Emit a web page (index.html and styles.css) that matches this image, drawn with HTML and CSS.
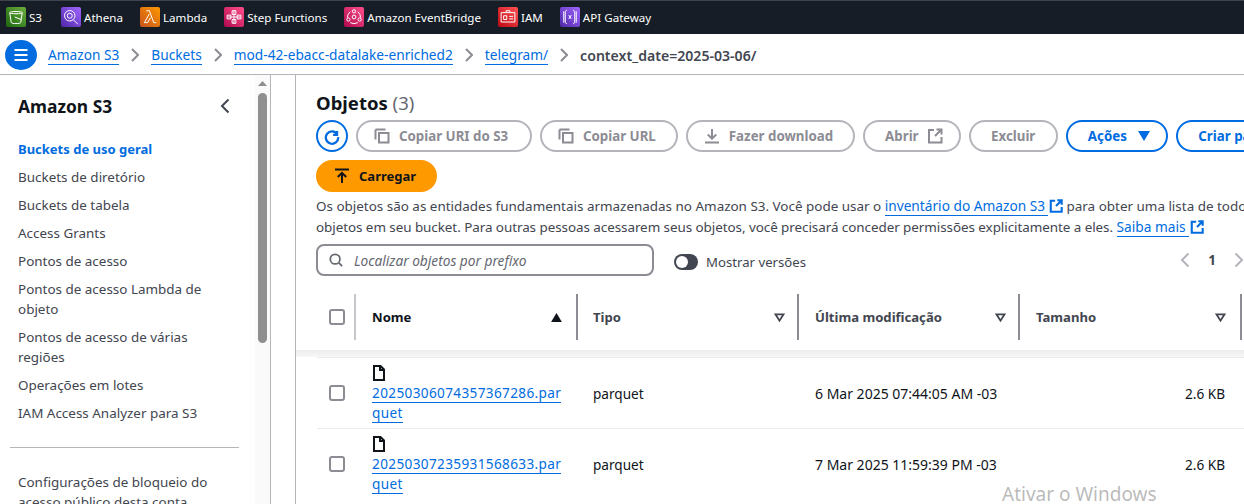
FILE: index.html
```html
<!DOCTYPE html>
<html>
<head>
   <link rel="stylesheet" href="styles.css">
</head>
<body>
   <div class="favbar">
      <span class="fav"><svg class="svc s3" viewBox="0 0 16 16"><path d="M3 4.500c0-1.200 10-1.200 10 0l-1.200 8c-.3 1-7.300 1-7.600 0zM3 4.500c0 1.200 10 1.200 10 0M7 8l5 2"/></svg>S3</span>
      <span class="fav"><svg class="svc athena" viewBox="0 0 16 16"><circle cx="7" cy="7" r="4.200"/><circle cx="7" cy="7" r="2"/><path d="M10 10.300l3.500 3.500"/></svg>Athena</span>
      <span class="fav"><svg class="svc lambda" viewBox="0 0 16 16"><path d="M5 3h2.500L11 12.500h2M7.500 5.500L3.500 12.500h2.500l2.500-4"/></svg>Lambda</span>
      <span class="fav"><svg class="svc stepf" viewBox="0 0 16 16"><path d="M8 2.500v11M3 8h10M6.500 3h3v3h-3zM6.500 10h3v3h-3zM2.500 6.500h3v3h-3zM10.500 6.500h3v3h-3z"/></svg>Step Functions</span>
      <span class="fav"><svg class="svc bridge" viewBox="0 0 16 16"><circle cx="8" cy="3.500" r="1.300"/><circle cx="3.500" cy="10" r="1.300"/><circle cx="12.500" cy="10" r="1.300"/><circle cx="8" cy="8" r="1.500"/><path d="M5 3.800a6 6 0 0 0-2.300 4.700M11 3.800a6 6 0 0 1 2.300 4.700M5 12.500a6 6 0 0 0 6 0"/></svg>Amazon EventBridge</span>
      <span class="fav"><svg class="svc iam" viewBox="0 0 16 16"><path d="M2.500 4.500h11v7.500h-11zM4.500 7h2.500v3h-2.500zM9 7.500h3M9 9.500h3M6.500 4.500v-1.500h3v1.500"/></svg>IAM</span>
      <span class="fav"><svg class="svc gateway" viewBox="0 0 16 16"><path d="M3 3.500v9M5.500 2.500l-1.300 1v9l1.300 1M13 3.500v9M10.500 2.500l1.300 1v9l-1.300 1M7 6.500l1 1.500-1 1.500M9 6.500l-1 1.500 1 1.500"/></svg>API Gateway</span>
   </div>

   <div class="crumbbar">
      <button class="menu-btn"><svg viewBox="0 0 16 16"><path d="M1.500 3h13M1.500 8h13M1.500 13h13"/></svg></button>
      <a class="link">Amazon S3</a>
      <svg class="sep" viewBox="0 0 8 14"><path d="M1 1l6 6-6 6"/></svg>
      <a class="link">Buckets</a>
      <svg class="sep" viewBox="0 0 8 14"><path d="M1 1l6 6-6 6"/></svg>
      <a class="link">mod-42-ebacc-datalake-enriched2</a>
      <svg class="sep" viewBox="0 0 8 14"><path d="M1 1l6 6-6 6"/></svg>
      <a class="link">telegram/</a>
      <svg class="sep" viewBox="0 0 8 14"><path d="M1 1l6 6-6 6"/></svg>
      <span class="crumb-current">context_date=2025-03-06/</span>
   </div>

   <div class="layout">
      <nav class="sidenav">
         <div class="nav-head">
            <h2>Amazon S3</h2>
            <svg class="nav-close" viewBox="0 0 10 16"><path d="M8.500 1.500L2 8l6.500 6.500"/></svg>
         </div>
         <ul class="nav-list">
            <li class="active">Buckets de uso geral</li>
            <li>Buckets de diretório</li>
            <li>Buckets de tabela</li>
            <li>Access Grants</li>
            <li>Pontos de acesso</li>
            <li>Pontos de acesso Lambda de objeto</li>
            <li>Pontos de acesso de várias regiões</li>
            <li>Operações em lotes</li>
            <li>IAM Access Analyzer para S3</li>
         </ul>
         <hr class="nav-rule">
         <ul class="nav-list">
            <li>Configurações de bloqueio do acesso público desta conta</li>
         </ul>
      </nav>

      <div class="scrollbar"><span class="scroll-up"></span><span class="scroll-thumb"></span></div>
      <div class="gutter"></div>

      <main class="content">
         <h1>Objetos <span class="count">(3)</span></h1>

         <div class="actions">
            <button class="refresh"><svg viewBox="0 0 16 16"><path d="M12.500 3.500v3.500H9M12.700 6.500A5.500 5.500 0 1 0 13.500 9"/></svg></button>
            <button class="btn copy-uri"><svg class="ico" viewBox="0 0 16 16"><path d="M1.500 1.500h10M1.500 1.500v10M5 5h9.500v9.500H5z"/></svg>Copiar URI do S3</button>
            <button class="btn"><svg class="ico" viewBox="0 0 16 16"><path d="M1.500 1.500h10M1.500 1.500v10M5 5h9.500v9.500H5z"/></svg>Copiar URL</button>
            <button class="btn"><svg class="ico" viewBox="0 0 16 16"><path d="M8 1v9.500M3.800 6.500L8 10.700l4.200-4.200M1 14.500h14"/></svg>Fazer download</button>
            <button class="btn trailing">Abrir<svg class="ico after" viewBox="0 0 16 16"><path d="M7 2H2v12.500h12.500V9M9.500 1.500h5v5M14.500 1.500L8 8"/></svg></button>
            <button class="btn plain">Excluir</button>
            <button class="btn normal trailing">Ações<svg class="caret" viewBox="0 0 12 10"><path d="M0 0h12L6 10z"/></svg></button>
            <button class="btn normal plain">Criar pasta</button>
            <button class="btn primary"><svg class="ico" viewBox="0 0 16 16"><path d="M1 1.500h14M8 15V5M3.800 9L8 4.800 12.200 9"/></svg>Carregar</button>
         </div>

         <p class="desc">Os objetos são as entidades fundamentais armazenadas no Amazon S3. Você pode usar o <a class="link ext">inventário do Amazon S3</a><svg class="ext-ico" viewBox="0 0 16 16"><path d="M7 2H2v12.500h12.500V9M9.500 1.500h5v5M14.500 1.500L8 8"/></svg> para obter uma lista de todos os<br><span class="desc-tight">objetos em seu bucket. Para outras pessoas acessarem seus objetos, você precisará conceder permissões explicitamente a eles.</span> <a class="link ext">Saiba mais</a><svg class="ext-ico" viewBox="0 0 16 16"><path d="M7 2H2v12.500h12.500V9M9.500 1.500h5v5M14.500 1.500L8 8"/></svg></p>

         <div class="filters">
            <div class="search">
               <svg viewBox="0 0 16 16"><circle cx="7" cy="7" r="5.500"/><path d="M11 11l4 4"/></svg>
               <span>Localizar objetos por prefixo</span>
            </div>
            <div class="toggle"><span class="knob"></span></div>
            <span class="toggle-label">Mostrar versões</span>
            <div class="pager">
               <svg viewBox="0 0 10 16"><path d="M8.500 1.500L2 8l6.500 6.500"/></svg>
               <b>1</b>
               <svg viewBox="0 0 10 16"><path d="M1.500 1.500L8 8l-6.500 6.500"/></svg>
            </div>
         </div>

         <div class="table-wrap">
            <div class="row head">
               <div class="cell c-check"><span class="check"></span></div>
               <div class="cell c-name">Nome<svg class="sort" viewBox="0 0 12 10"><path d="M6 0l6 10H0z"/></svg></div>
               <div class="cell c-type">Tipo<svg class="sort hollow" viewBox="0 0 12 10"><path d="M1.500 1.500h9L6 8.500z"/></svg></div>
               <div class="cell c-date">Última modificação<svg class="sort hollow" viewBox="0 0 12 10"><path d="M1.500 1.500h9L6 8.500z"/></svg></div>
               <div class="cell c-size">Tamanho<svg class="sort hollow" viewBox="0 0 12 10"><path d="M1.500 1.500h9L6 8.500z"/></svg></div>
            </div>
            <div class="head-shadow"></div>
            <div class="row item">
               <div class="cell c-check"><span class="check"></span></div>
               <div class="cell c-name">
                  <svg class="file" viewBox="0 0 14 16"><path d="M2 1h6.500L12 4.500V15H2zM8 1v4h4"/></svg>
                  <a class="link file-link">20250306074357367286.parquet</a>
               </div>
               <div class="cell c-type">parquet</div>
               <div class="cell c-date">6 Mar 2025 07:44:05 AM -03</div>
               <div class="cell c-size">2.6 KB</div>
            </div>
            <div class="row item">
               <div class="cell c-check"><span class="check"></span></div>
               <div class="cell c-name">
                  <svg class="file" viewBox="0 0 14 16"><path d="M2 1h6.500L12 4.500V15H2zM8 1v4h4"/></svg>
                  <a class="link file-link">20250307235931568633.parquet</a>
               </div>
               <div class="cell c-type">parquet</div>
               <div class="cell c-date">7 Mar 2025 11:59:39 PM -03</div>
               <div class="cell c-size">2.6 KB</div>
            </div>
         </div>
      </main>
   </div>

   <div class="watermark">Ativar o Windows</div>
</body>
</html>
```

FILE: styles.css
```css
* {
   box-sizing: border-box;
}

html, body {
   margin: 0;
   height: 504px;
   overflow: hidden;
}

body {
   font-family: "Noto Sans", "Open Sans", sans-serif;
   font-size: 13.45px;
   color: #0f141a;
   background: #fff;
}

svg {
   fill: none;
   stroke: currentColor;
   flex: none;
}

.link {
   color: #006ce0;
   border-bottom: 1px solid #006ce0;
}

/* favorites bar */
.favbar {
   height: 34px;
   background: #161d26;
   border-top: 1px solid #3d4450;
   display: flex;
   align-items: center;
   padding: 0 0 1px 6px;
   gap: 17px;
   color: #fff;
   font-size: 11.6px;
}

.fav {
   display: flex;
   align-items: center;
   gap: 3px;
}

.fav:first-child {
   margin-right: 2px;
}

.svc {
   width: 20px;
   height: 20px;
   border-radius: 2px;
   stroke: #fff;
   stroke-width: .8;
}

.s3 { background: linear-gradient(45deg, #1b660f, #6cae3e); }
.athena { background: linear-gradient(45deg, #4d27a8, #a166ff); }
.lambda { background: linear-gradient(45deg, #c8511b, #f90); }
.stepf { background: linear-gradient(45deg, #b0084d, #ff4f8b); }
.bridge { background: linear-gradient(45deg, #b0084d, #ff4f8b); }
.iam { background: linear-gradient(45deg, #bd0816, #ff5252); }
.gateway { background: linear-gradient(45deg, #4d27a8, #a166ff); }

/* breadcrumbs */
.crumbbar {
   height: 41px;
   background: #fff;
   border-bottom: 1px solid #b4b4bb;
   display: flex;
   align-items: center;
   padding: 2px 0 0 5px;
   font-size: 13.7px;
}

.menu-btn {
   width: 32px;
   height: 30px;
   border: none;
   border-radius: 50%;
   background: #006ce0;
   color: #fff;
   padding: 7px 8px;
   margin-right: 11px;
   display: flex;
}

.menu-btn svg {
   width: 16px;
   height: 16px;
   stroke-width: 2;
}

.sep {
   width: 8px;
   height: 14px;
   margin: 0 12px;
   color: #8c8c94;
   stroke-width: 2;
}

.crumb-current {
   color: #424650;
   font-size: 14.1px;
   font-weight: 600;
}

/* side navigation */
.layout {
   display: flex;
   height: 429px;
}

.sidenav {
   width: 255px;
   flex: none;
   padding: 0 18px;
   overflow: hidden;
}

.nav-head {
   height: 64px;
   display: flex;
   align-items: center;
   justify-content: space-between;
   padding: 0 7px 2px 0;
}

.nav-head h2 {
   margin: 0;
   font-size: 17.4px;
   font-weight: 700;
}

.nav-close {
   width: 10px;
   height: 16px;
   color: #424650;
   stroke-width: 2;
}

.nav-list {
   list-style: none;
   margin: 0;
   padding: 0;
   color: #424650;
   width: 205px;
   line-height: 20px;
}

.nav-list li {
   margin-bottom: 8px;
}

.nav-list .active {
   color: #006ce0;
   font-size: 13px;
   font-weight: 700;
}

.nav-rule {
   margin: 24px 0 24px -8px;
   width: 229px;
   border: none;
   border-top: 1px solid #b4b4bb;
}

.scrollbar {
   width: 15px;
   flex: none;
   background: #fafafa;
}

.scroll-up {
   display: block;
   margin: 6px 0 0 3px;
   width: 9px;
   height: 5px;
   background: #8f8f8f;
   clip-path: polygon(50% 0, 100% 100%, 0 100%);
}

.scroll-thumb {
   display: block;
   margin: 7px 0 0 3px;
   height: 250px;
   width: 9px;
   border-radius: 5px;
   background: #8f8f8f;
}

.gutter {
   width: 26px;
   flex: none;
   border-left: 1px solid #b4b4bb;
   border-right: 1px solid #b4b4bb;
}

/* objects panel */
.content {
   flex: 1;
   min-width: 0;
   padding-left: 20px;
   overflow: hidden;
}

h1 {
   margin: 0;
   padding-top: 16px;
   height: 45px;
   font-size: 18.5px;
   line-height: 24px;
   font-weight: 700;
}

.count {
   color: #656871;
   font-weight: 400;
}

.actions {
   display: flex;
   flex-wrap: wrap;
   width: 1000px;
   gap: 8px;
}

.actions button {
   font-family: inherit;
}

.refresh {
   width: 32px;
   height: 32px;
   border: 2px solid #006ce0;
   border-radius: 50%;
   background: #fff;
   color: #006ce0;
   padding: 5px;
   display: flex;
}

.refresh svg {
   width: 18px;
   height: 18px;
   stroke-width: 2;
}

.btn {
   height: 32px;
   border: 2px solid #b4b4bb;
   border-radius: 16px;
   background: #fff;
   color: #8c8c94;
   font-size: 13.3px;
   font-weight: 700;
   padding: 0 20px 0 16px;
   display: flex;
   align-items: center;
   white-space: nowrap;
}

.btn.copy-uri {
   width: 176px;
}

.ico {
   width: 16px;
   height: 16px;
   margin-right: 9px;
   stroke-width: 2;
}

.ico.after {
   margin: 0 0 0 8px;
}

.btn.plain {
   padding: 0 20.5px;
}

.btn.trailing {
   padding: 0 16px 0 20px;
}

.btn.normal {
   border-color: #006ce0;
   color: #006ce0;
}

.caret {
   width: 12px;
   height: 10px;
   margin-left: 11px;
   fill: currentColor;
   stroke: none;
}

.btn.primary {
   width: 121px;
   background: #ff9900;
   border-color: #ff9900;
   color: #0f141a;
   font-size: 13px;
   padding: 0 0 0 16px;
}

.desc {
   margin: 4px 0 0;
   width: 950px;
   line-height: 21px;
   color: #424650;
   white-space: nowrap;
}

.desc-tight {
   letter-spacing: -.06px;
}

.ext {
   font-size: 13.7px;
   line-height: 14px;
   padding-right: 3px;
}

.ext-ico {
   width: 14px;
   height: 14px;
   margin-left: 1px;
   color: #006ce0;
   stroke-width: 2.4;
   vertical-align: -2px;
}

.filters {
   display: flex;
   align-items: center;
   margin-top: 6px;
   height: 32px;
   width: 928px;
}

.search {
   width: 338px;
   height: 32px;
   border: 2px solid #8c8c94;
   border-radius: 8px;
   display: flex;
   align-items: center;
   padding-left: 11px;
   gap: 11px;
   color: #656871;
   font-size: 13.7px;
   font-style: italic;
}

.search svg {
   width: 14px;
   height: 14px;
   stroke-width: 2;
}

.toggle {
   width: 24px;
   height: 16px;
   border-radius: 8px;
   background: #424650;
   margin: 4px 0 0 20px;
   padding: 2px;
}

.knob {
   display: block;
   width: 12px;
   height: 12px;
   border-radius: 50%;
   background: #fff;
}

.toggle-label {
   margin: 4px 0 0 8px;
   font-size: 13.2px;
   color: #424650;
}

.pager {
   margin-left: auto;
   display: flex;
   align-items: center;
   gap: 18px;
   color: #b4b4bb;
}

.pager svg {
   width: 10px;
   height: 16px;
   stroke-width: 2;
}

.pager b {
   color: #424650;
}

/* table */
.table-wrap {
   margin: 12px 0 0 -20px;
   width: 960px;
}

.row {
   display: flex;
}

.row.head {
   height: 62px;
   padding-top: 6px;
   font-size: 13.1px;
   font-weight: 700;
   color: #424650;
}

.head-shadow {
   height: 7px;
   background: linear-gradient(#ececec, #f7f7f7);
}

.row.item {
   height: 71px;
   margin-left: 21px;
   border-top: 1px solid #e9ebed;
   color: #0f141a;
}

.cell {
   display: flex;
   align-items: center;
   flex: none;
}

.head .cell {
   border-right: 2px solid #8c8c94;
   padding: 0 12px 0 16px;
   justify-content: space-between;
   height: 46px;
}

.c-check {
   width: 60px;
}

.head .c-check {
   border-color: #c6c6cd;
   justify-content: flex-end;
   padding: 0 9px 0 0;
}

.item .c-check {
   width: 39px;
   justify-content: center;
}

.check {
   width: 16px;
   height: 16px;
   border: 2px solid #8c8c94;
   border-radius: 3px;
}

.c-name {
   width: 222px;
}

.head .c-name {
   color: #0f141a;
   padding-right: 14px;
}

.item .c-name {
   display: block;
   padding: 7px 14px 0 16px;
   line-height: 20px;
}

.c-type {
   width: 221px;
}

.c-date {
   width: 221px;
}

.c-size {
   width: 222px;
}

.head .c-type {
   padding-left: 15px;
}

.head .c-size {
   padding-right: 14px;
}

.item .c-type {
   padding-left: 15px;
   font-size: 13.6px;
}

.item .c-date {
   padding-left: 16px;
   font-size: 14px;
}

.item .c-size {
   width: 205px;
   justify-content: flex-end;
   font-size: 13.6px;
}

.sort {
   width: 11px;
   height: 9px;
   fill: #0f141a;
   stroke: none;
}

.sort.hollow {
   fill: none;
   stroke: #424650;
   stroke-width: 2;
}

.file {
   display: block;
   width: 14px;
   height: 16px;
   stroke-width: 2;
   margin-bottom: 2px;
}

.file-link {
   font-size: 13.6px;
   letter-spacing: .35px;
   word-break: break-all;
}

.watermark {
   position: absolute;
   left: 1002px;
   top: 481px;
   font-size: 19px;
   color: rgba(140, 140, 140, 0.6);
   white-space: nowrap;
}
```
